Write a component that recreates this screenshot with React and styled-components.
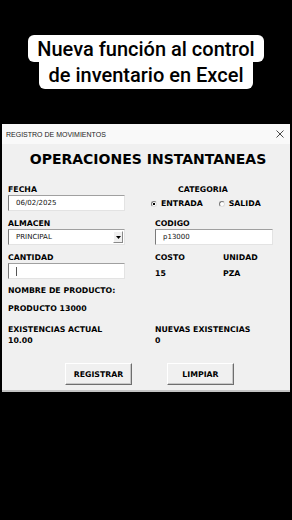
import React from 'react'
import styled, { createGlobalStyle } from 'styled-components'

const GlobalStyle = createGlobalStyle`
  html, body {
    margin: 0;
    padding: 0;
    background: #000;
  }
  body {
    width: 292px;
    height: 520px;
    overflow: hidden;
  }
`

const Page = styled.div`
  width: 292px;
  height: 520px;
  background: #000;
  display: flex;
  flex-direction: column;
  align-items: center;
`

const Caption = styled.div`
  margin-top: 35px;
  display: flex;
  flex-direction: column;
  align-items: center;
  font-family: Roboto, 'Liberation Sans', sans-serif;
  font-size: 20px;
  font-weight: 500;
  color: #000;
`

const CaptionLine = styled.div`
  background: #fff;
  line-height: 26px;
  white-space: nowrap;
  padding: ${({ $first }) => ($first ? '1px 9px 0' : '0 10px 1px')};
  border-radius: ${({ $first }) => ($first ? '6px' : '0 0 6px 6px')};
`

const Dialog = styled.div`
  margin-top: 35px;
  width: 288px;
  background: #f0f0f0;
  border-bottom: 2px solid #c4c4c4;
  font-family: 'DejaVu Sans', Verdana, sans-serif;
  color: #000;
`

const TitleBar = styled.div`
  height: 20px;
  background: #f9f9f9;
  display: flex;
  align-items: center;
  justify-content: space-between;
  padding: 0 6px 0 4px;
  font-family: 'Liberation Sans', Arial, sans-serif;
  font-size: 7px;
  color: #222;
`

const Body = styled.div`
  padding: 0 6px 5px;
`

const Heading = styled.h1`
  margin: 0;
  height: 30px;
  line-height: 30px;
  text-align: center;
  font-size: 14px;
  font-weight: bold;
  padding-left: 4px;
`

const Row = styled.div`
  display: grid;
  grid-template-columns: 117px 118px;
  column-gap: 30px;
  margin-top: ${({ $mt }) => $mt || 0}px;
  height: ${({ $h }) => $h}px;
  align-items: ${({ $align }) => $align || 'stretch'};
`

const Label = styled.div`
  font-size: 7.8px;
  font-weight: bold;
  line-height: ${({ $lh }) => $lh || 11}px;
  white-space: nowrap;
  padding-left: ${({ $indent }) => $indent || 0}px;
`

const Pair = styled.div`
  display: grid;
  grid-template-columns: 68px 1fr;
  align-self: ${({ $self }) => $self || 'stretch'};
`

const Field = styled.div`
  position: relative;
  height: 16px;
  box-sizing: border-box;
  background: #fff;
  border-top: 1px solid #a0a0a0;
  border-left: 1px solid #7a7a7a;
  border-right: 1px solid #e3e3e3;
  border-bottom: 1px solid #e3e3e3;
  display: flex;
  align-items: center;
  padding-left: 7px;
  font-size: 7px;
  color: #111;
`

const Caret = styled.span`
  width: 1px;
  height: 9px;
  background: #555;
`

const DropButton = styled.span`
  position: absolute;
  right: 1px;
  top: 1px;
  bottom: 1px;
  width: 10px;
  background: #f0f0f0;
  border-top: 1px solid #fff;
  border-left: 1px solid #fff;
  border-right: 1px solid #8a8a8a;
  border-bottom: 1px solid #8a8a8a;
  box-sizing: border-box;
  display: flex;
  align-items: center;
  justify-content: center;
`

const Radios = styled.div`
  margin-left: -4px;
  display: flex;
  align-items: center;
  gap: 16px;
  padding-top: 1px;
`

const RadioItem = styled.label`
  display: flex;
  align-items: center;
  gap: 4px;
  font-size: 7.8px;
  font-weight: bold;
`

const RadioDot = styled.span`
  width: 6px;
  height: 6px;
  box-sizing: border-box;
  border-radius: 50%;
  border: 1px solid #777;
  border-right-color: #ddd;
  border-bottom-color: #ddd;
  background: ${({ $on }) => ($on ? 'radial-gradient(circle, #000 0 1.3px, #fff 1.5px)' : '#fff')};
`

const Buttons = styled.div`
  display: flex;
  gap: 35px;
  margin: 17px 0 0 57px;
`

const Button = styled.button`
  width: 67px;
  height: 22px;
  padding: 0;
  background: #f0f0f0;
  border-top: 1px solid #fff;
  border-left: 1px solid #fff;
  border-right: 1px solid #6e6e6e;
  border-bottom: 1px solid #6e6e6e;
  box-shadow: inset -1px -1px 0 #c8c8c8;
  font-family: 'DejaVu Sans', Verdana, sans-serif;
  font-size: 7.8px;
  font-weight: bold;
  color: #000;
`

const Close = () => (
  <svg width="8" height="8" viewBox="0 0 8 8">
    <path d="M0.5 0.5 L7.5 7.5 M7.5 0.5 L0.5 7.5" stroke="#333" strokeWidth="0.9" />
  </svg>
)

const Arrow = () => (
  <svg width="5" height="3" viewBox="0 0 5 3">
    <path d="M0 0 H5 L2.5 3 Z" fill="#000" />
  </svg>
)

export default function App() {
  return (
    <>
      <GlobalStyle />
      <Page>
        <Caption>
          <CaptionLine $first>Nueva función al control</CaptionLine>
          <CaptionLine>de inventario en Excel</CaptionLine>
        </Caption>

        <Dialog>
          <TitleBar>
            <span>REGISTRO DE MOVIMIENTOS</span>
            <Close />
          </TitleBar>
          <Body>
            <Heading>OPERACIONES INSTANTANEAS</Heading>

            <Row $mt={10} $h={11}>
              <Label>FECHA</Label>
              <Label $indent={23}>CATEGORIA</Label>
            </Row>
            <Row $h={16}>
              <Field>06/02/2025</Field>
              <Radios>
                <RadioItem>
                  <RadioDot $on />
                  ENTRADA
                </RadioItem>
                <RadioItem>
                  <RadioDot />
                  SALIDA
                </RadioItem>
              </Radios>
            </Row>

            <Row $mt={7} $h={11}>
              <Label>ALMACEN</Label>
              <Label>CODIGO</Label>
            </Row>
            <Row $h={16}>
              <Field>
                PRINCIPAL
                <DropButton>
                  <Arrow />
                </DropButton>
              </Field>
              <Field>p13000</Field>
            </Row>

            <Row $mt={7} $h={11}>
              <Label>CANTIDAD</Label>
              <Pair>
                <Label>COSTO</Label>
                <Label>UNIDAD</Label>
              </Pair>
            </Row>
            <Row $h={16}>
              <Field>
                <Caret />
              </Field>
              <Pair $self="end">
                <Label>15</Label>
                <Label>PZA</Label>
              </Pair>
            </Row>

            <Row $mt={6} $h={12}>
              <Label $lh={12}>NOMBRE DE PRODUCTO:</Label>
            </Row>
            <Row $mt={5} $h={13}>
              <Label $lh={13}>PRODUCTO 13000</Label>
            </Row>

            <Row $mt={9} $h={12}>
              <Label $lh={12}>EXISTENCIAS ACTUAL</Label>
              <Label $lh={12}>NUEVAS EXISTENCIAS</Label>
            </Row>
            <Row $h={10}>
              <Label $lh={10}>10.00</Label>
              <Label $lh={10}>0</Label>
            </Row>

            <Buttons>
              <Button>REGISTRAR</Button>
              <Button>LIMPIAR</Button>
            </Buttons>
          </Body>
        </Dialog>
      </Page>
    </>
  )
}
